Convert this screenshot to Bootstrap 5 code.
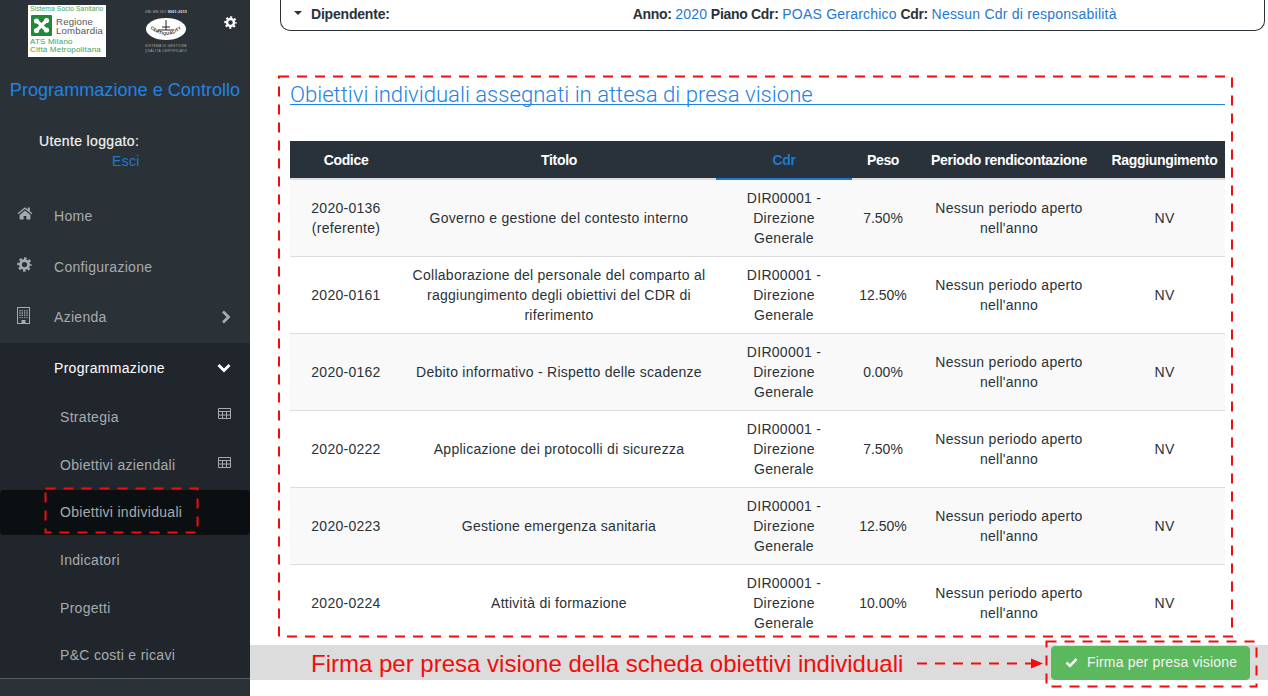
<!DOCTYPE html>
<html lang="it">
<head>
<meta charset="UTF-8">
<title>Programmazione e Controllo</title>
<link href="https://cdn.jsdelivr.net/npm/bootstrap@5.3.3/dist/css/bootstrap.min.css" rel="stylesheet">
<style>
html, body { height: 696px; overflow: hidden; }
body { font-family: "Liberation Sans", Arial, sans-serif; font-size: 14px; color: #2a3238; background: #fff; line-height: 20px; }
a { color: #1f78d1; text-decoration: none; }

/* sidebar */
.side-col { width: 250px; height: 696px; flex: none; background: #2a3238; color: #a7abae; letter-spacing: .3px; }
.logo-row { height: 68px; padding: 5px 0 0 28px; }
.logo-rl { width: 78px; height: 52px; background: #fff; color: #3aa35a; font-size: 6.7px; line-height: 7px; padding: 0 2px; letter-spacing: .1px; overflow: hidden; }
.logo-rl .rl-mid { margin: 3px 0 2px 1px; }
.logo-rl .rl-name { color: #555; font-size: 9.6px; line-height: 9px; letter-spacing: .2px; }
.logo-rl .rl-ats { font-size: 8px; line-height: 8px; letter-spacing: .2px; }
.logo-cq { margin-left: 39px; margin-top: 4px; }
.gear-top { margin-left: 37px; margin-top: 11px; }
.app-title { color: #2382e2; font-size: 18.1px; line-height: 24px; text-align: center; margin-top: 10px; height: 24px; white-space: nowrap; letter-spacing: 0; }
.user-box { height: 89px; padding-top: 29px; }
.user-box .u-name { padding-left: 39px; color: #f2f2f2; letter-spacing: .35px; -webkit-text-stroke: .2px #f2f2f2; }
.user-box .u-exit { padding-left: 112px; }
.side-link { display: flex; align-items: center; color: #a7abae; height: 50.5px; padding-left: 54px; padding-right: 19px; position: relative; }
.side-link .ico-left { position: absolute; left: 17px; top: 15px; }
.side-link .ico-right { margin-left: auto; }
.sub-nav { background: #21262d; height: 336px; border-bottom: 1px solid #555b60; }
.sub-nav .side-link { padding-left: 60px; height: 47.5px; }
.sub-nav .lvl2 { padding-left: 54px; color: #fff; height: 51px; }
.sub-nav .on { background: #0c0f12; border-radius: 4px; height: 45px; margin: 1px 0 2px; }

/* main */
.main-col { flex: 1 1 auto; min-width: 0; padding-left: 30px; }
.top-card { height: 31px; width: 985px; border: 1px solid #2a3238; border-top: 0; border-radius: 0 0 10px 10px; padding: 4px 13px 0 13px; font-weight: 700; display: flex; letter-spacing: -.2px; }
.top-card .meta { margin-left: 243px; letter-spacing: -.3px; }
.top-card .meta a { font-weight: 400; letter-spacing: .22px; }
.caret-d { width: 0; height: 0; border: 4px solid transparent; border-top: 4px solid #2a3238; margin: 7px 9px 0 0; }
.sect { width: 935px; margin: 46px 0 0 10px; }
.sect-title { font-family: Roboto, sans-serif; font-weight: 300; font-size: 22.1px; line-height: 34px; color: #2382e2; border-bottom: 1px solid #2382e2; margin: 0 0 36px; height: 28px; }
.goal-table { table-layout: fixed; margin: 0; --bs-table-striped-bg: #f9f9f9; --bs-table-striped-color: #2a3238; --bs-table-color: #2a3238; }
.goal-table th { background: #29323a; color: #fff; height: 38px; padding: 0; text-align: center; vertical-align: middle; border-bottom: 2px solid #dddddd; white-space: nowrap; font-size: 14px; letter-spacing: -.33px; }
.goal-table th.sorted { color: #1f78d1; border-bottom-color: #1f78d1; }
.goal-table td { height: 77px; padding: 0 8px; text-align: center; vertical-align: middle; border-bottom: 0; border-top: 1px solid #dddddd; letter-spacing: .27px; }
.goal-table td.peso-val { padding: 0; letter-spacing: 0; }
.goal-table tbody tr:first-child td { border-top: 0; }
.sign-bar { background: #dcdcdc; height: 35px; margin: 4px 0 0 -30px; padding: 0 18px 0 61px; display: flex; align-items: center; justify-content: space-between; }
.sign-text { color: #f20d0d; font-size: 24px; white-space: nowrap; padding-top: 2px; }
.btn-sign { background: #5cb85c; border-color: #5cb85c; color: #f4f4f4; width: 199px; height: 34px; font-size: 14px; padding: 0 0 0 13px; display: flex; align-items: center; gap: 9px; border-radius: 4px; letter-spacing: .17px; }

/* red marks drawn over the shot */
.mark-layer { position: absolute; left: 0; top: 0; pointer-events: none; }
</style>
</head>
<body>
<svg width="0" height="0" class="position-absolute">
  <symbol id="i-gear" viewBox="0 0 16 16">
    <circle cx="8" cy="8" r="4.3" fill="none" stroke="currentColor" stroke-width="3"/>
    <circle cx="8" cy="8" r="6.4" fill="none" stroke="currentColor" stroke-width="2.6" stroke-dasharray="2.6 2.43" stroke-dashoffset="1.3"/>
  </symbol>
  <symbol id="i-home" viewBox="0 0 16 14">
    <path fill="currentColor" d="M8 1.2 .6 7.3l.8 1L8 3l6.6 5.3.8-1-2.6-2.1V1.6h-2v2L8 1.2Zm0 3.3L2.6 8.9V13.4h4V9.9h2.8v3.5h4V8.9L8 4.5Z"/>
  </symbol>
  <symbol id="i-build" viewBox="0 0 13 17">
    <path fill="currentColor" fill-rule="evenodd" d="M0 0h13v17H0V0Zm1 1v15h3.5v-3h4v3H12V1H1Z"/>
    <path stroke="currentColor" stroke-width="1.2" stroke-dasharray="1.4 .9" d="M3 3v8M5.3 3v8M7.7 3v8M10 3v8"/>
  </symbol>
  <symbol id="i-right" viewBox="0 0 10 14"><path d="M2 1.5 7.5 7 2 12.5" fill="none" stroke="currentColor" stroke-width="2.8"/></symbol>
  <symbol id="i-down" viewBox="0 0 14 10"><path d="M1.5 2 7 7.5 12.5 2" fill="none" stroke="currentColor" stroke-width="2.8"/></symbol>
  <symbol id="i-grid" viewBox="0 0 13 11">
    <path fill="none" stroke="currentColor" d="M.5.5h12v10H.5zM.5 3.5h12M.5 7h12M4.5 3.5v7M8.5 3.5v7"/>
  </symbol>
</svg>

<div class="d-flex">
  <aside class="side-col">
    <div class="logo-row d-flex">
      <div class="logo-rl">
        <div class="text-nowrap">Sistema Socio Sanitario</div>
        <div class="d-flex align-items-center gap-1 rl-mid">
          <svg width="21" height="21" viewBox="0 0 21 21"><rect width="21" height="21" rx="1" fill="#1f8a3a"/><path d="M10.5 10.5 6 6M10.5 10.5 15 6M10.5 10.5 6 15M10.5 10.5 15 15" stroke="#fff" stroke-width="3.2"/><circle cx="5.5" cy="6" r="2.6" fill="#fff"/><circle cx="15.5" cy="5.5" r="2.6" fill="#fff"/><circle cx="5.5" cy="15.5" r="2.6" fill="#fff"/><circle cx="15.5" cy="15" r="2.6" fill="#fff"/></svg>
          <div class="rl-name">Regione<br>Lombardia</div>
        </div>
        <div class="rl-ats text-nowrap">ATS Milano<br>Città Metropolitana</div>
      </div>
      <svg class="logo-cq" width="42" height="46" viewBox="0 0 42 46" font-family="Liberation Sans">
        <text x="21" y="4" font-size="3.5" fill="#bbb" text-anchor="middle">UNI EN ISO <tspan fill="#eee" font-weight="700">9001:2015</tspan></text>
        <ellipse cx="21" cy="20" rx="20" ry="11" fill="#fff"/>
        <path d="M21 11v10M13 21h16M17 18h8" stroke="#222" stroke-width="1"/>
        <path id="cq-arc" d="M4 18Q21 34 38 18" fill="none"/>
        <text font-size="4.3" fill="#222" font-weight="700"><textPath href="#cq-arc" startOffset="50%" text-anchor="middle">CERTIQUALITY</textPath></text>
        <text x="21" y="38" font-size="3.3" fill="#aaa" text-anchor="middle">SISTEMA DI GESTIONE</text>
        <text x="21" y="42.5" font-size="3.3" fill="#aaa" text-anchor="middle">QUALITÀ CERTIFICATO</text>
      </svg>
      <svg class="gear-top text-white" width="13" height="13"><use href="#i-gear"/></svg>
    </div>
    <div class="app-title">Programmazione e Controllo</div>
    <div class="user-box">
      <div class="u-name">Utente loggato:</div>
      <div class="u-exit"><a href="#">Esci</a></div>
    </div>
    <nav>
      <a class="side-link" href="#"><svg class="ico-left" width="16" height="14"><use href="#i-home"/></svg>Home</a>
      <a class="side-link" href="#"><svg class="ico-left" width="15" height="15"><use href="#i-gear"/></svg>Configurazione</a>
      <a class="side-link" href="#"><svg class="ico-left" width="13" height="17"><use href="#i-build"/></svg>Azienda<svg class="ico-right" width="10" height="14"><use href="#i-right"/></svg></a>
      <div class="sub-nav">
        <a class="side-link lvl2" href="#">Programmazione<svg class="ico-right" width="14" height="10"><use href="#i-down"/></svg></a>
        <a class="side-link" href="#">Strategia<svg class="ico-right mb-2" width="13" height="11"><use href="#i-grid"/></svg></a>
        <a class="side-link" href="#">Obiettivi aziendali<svg class="ico-right mb-1" width="13" height="11"><use href="#i-grid"/></svg></a>
        <a class="side-link on" href="#">Obiettivi individuali</a>
        <a class="side-link" href="#">Indicatori</a>
        <a class="side-link" href="#">Progetti</a>
        <a class="side-link" href="#">P&amp;C costi e ricavi</a>
      </div>
    </nav>
  </aside>

  <main class="main-col">
    <div class="top-card">
      <span class="caret-d"></span>
      <span>Dipendente:</span>
      <span class="meta">Anno: <a href="#">2020</a> Piano Cdr: <a href="#">POAS Gerarchico</a> Cdr: <a href="#">Nessun Cdr di responsabilità</a></span>
    </div>

    <section class="sect">
      <h4 class="sect-title">Obiettivi individuali assegnati in attesa di presa visione</h4>
      <table class="table table-striped goal-table">
        <colgroup>
          <col style="width:112px"><col style="width:314px"><col style="width:136px"><col style="width:62px"><col style="width:190px"><col style="width:121px">
        </colgroup>
        <thead>
          <tr><th>Codice</th><th>Titolo</th><th class="sorted">Cdr</th><th>Peso</th><th>Periodo rendicontazione</th><th>Raggiungimento</th></tr>
        </thead>
        <tbody id="goalRows"></tbody>
      </table>
    </section>

    <div class="sign-bar">
      <span class="sign-text">Firma per presa visione della scheda obiettivi individuali</span>
      <button class="btn btn-success btn-sign" type="button">
        <svg width="13" height="11" viewBox="0 0 13 11"><path d="M1.5 5.5 5 9l6.5-7" fill="none" stroke="currentColor" stroke-width="2.6"/></svg>
        Firma per presa visione
      </button>
    </div>
  </main>
</div>

<svg class="mark-layer" width="1268" height="696" fill="none" stroke="#f20d0d" stroke-width="2">
  <rect x="279" y="76.5" width="953" height="560" stroke-dasharray="10 8"/>
  <rect x="45.5" y="488.5" width="152" height="44" stroke-dasharray="10 8"/>
  <rect x="1046.5" y="641.5" width="210" height="45" stroke-dasharray="10 8"/>
  <path d="M917 663.5h115" stroke-dasharray="10 8"/>
  <path d="M1031 658.5l12 5-12 5z" fill="#f20d0d" stroke="none"/>
</svg>

<script>
  // righe obiettivi
  const goals = [
    ["2020-0136<br>(referente)", "Governo e gestione del contesto interno", "7.50%"],
    ["2020-0161", "Collaborazione del personale del comparto al raggiungimento degli obiettivi del CDR di riferimento", "12.50%"],
    ["2020-0162", "Debito informativo - Rispetto delle scadenze", "0.00%"],
    ["2020-0222", "Applicazione dei protocolli di sicurezza", "7.50%"],
    ["2020-0223", "Gestione emergenza sanitaria", "12.50%"],
    ["2020-0224", "Attività di formazione", "10.00%"]
  ];
  document.getElementById("goalRows").innerHTML = goals.map(g =>
    `<tr><td>${g[0]}</td><td>${g[1]}</td><td>DIR00001 - Direzione Generale</td><td class="peso-val">${g[2]}</td><td>Nessun periodo aperto nell'anno</td><td>NV</td></tr>`
  ).join("");
</script>
<script src="https://cdn.jsdelivr.net/npm/bootstrap@5.3.3/dist/js/bootstrap.bundle.min.js"></script>
</body>
</html>
